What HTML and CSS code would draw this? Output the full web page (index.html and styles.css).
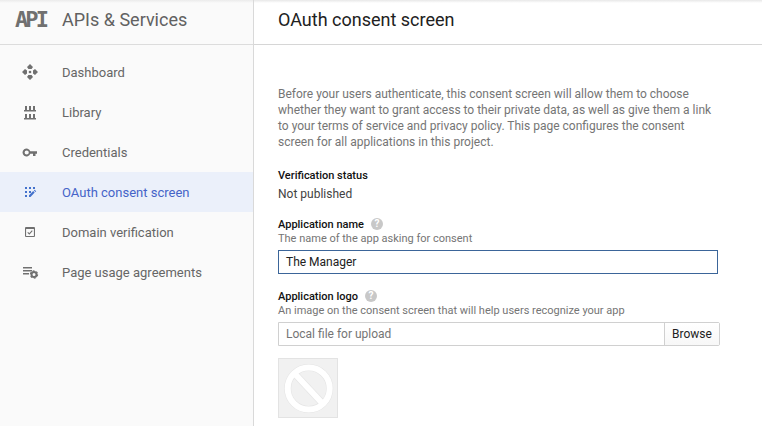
FILE: index.html
```html
<!DOCTYPE html>
<html lang="en">
<head>
<meta charset="utf-8">
<title>OAuth consent screen</title>
<link rel="stylesheet" href="styles.css">
</head>
<body>
<div class="app">
  <aside class="sidebar">
    <header class="brand"><span class="brand-mark">API</span><span class="brand-name">APIs &amp; Services</span></header>
    <nav class="nav">
      <a class="nav-item"><svg class="icon" viewBox="0 0 16 16"><path d="M8 0l3 3-1.400 2H6.400L5 3zM16 8l-3 3-2-1.400V6.400L13 5zM8 16l-3-3 1.400-2h3.200L11 13zM0 8l3-3 2 1.400v3.200L3 11z"/><circle cx="8" cy="8" r="1.300"/></svg><span>Dashboard</span></a>
      <a class="nav-item"><svg class="icon" viewBox="0 0 16 16"><path d="M3 2h2v4.500H3zM7 2h2v4.500H7zM11 2h2v4.500h-2zM2 6h12v1.500H2zM3 10h2v4.500H3zM7 10h2v4.500H7zM11 10h2v4.500h-2zM2 14h12v1.500H2z"/></svg><span>Library</span></a>
      <a class="nav-item"><svg class="icon" viewBox="0 0 16 16"><path fill-rule="evenodd" d="M8.300 7.200a4 4 0 1 0 0 2.600H11v2.200h2.500V9.800H15V7.200zM4.700 10.600a2.100 2.100 0 1 1 0-4.200 2.100 2.100 0 0 1 0 4.200z"/></svg><span>Credentials</span></a>
      <a class="nav-item active"><svg class="icon" viewBox="0 0 16 16"><path d="M3 3h2v2H3zM7 3h2v2H7zM11 3h2v2h-2zM3 7h2v2H3zM7 7h2v2H7zM3 11h2v2H3zM7 13v-1.700l4.200-4.200 1.500 1.500L8.500 13zM11.900 6.500l.8-.8 1.500 1.500-.8.8z"/></svg><span>OAuth consent screen</span></a>
      <a class="nav-item"><svg class="icon" viewBox="0 0 16 16"><path fill-rule="evenodd" d="M4 3h8q1 0 1 1v8q0 1-1 1H4q-1 0-1-1V4q0-1 1-1zM4.100 5v6.900h7.800V5z"/><path class="check" d="M5.700 8.400l1.600 1.500 3-3.200"/></svg><span>Domain verification</span></a>
      <a class="nav-item"><svg class="icon" viewBox="0 0 16 16"><path d="M1 3h9v1.500H1zM1 6h9v1.500H1zM1 9h6v1.500H1z"/><circle class="gear" cx="12" cy="10.500" r="2.500"/><circle class="teeth" cx="12" cy="10.500" r="3.600"/></svg><span>Page usage agreements</span></a>
    </nav>
  </aside>
  <main class="main">
    <header class="page-head"><h1>OAuth consent screen</h1></header>
    <div class="content">
      <p class="intro">Before your users authenticate, this consent screen will allow them to choose<br>whether they want to grant access to their private data, as well as give them a link<br>to your terms of service and privacy policy. This page configures the consent<br>screen for all applications in this project.</p>
      <section class="status"><h2>Verification status</h2><p>Not published</p></section>
      <section class="field">
        <div class="label"><h2>Application name</h2><span class="help">?</span></div>
        <p class="hint">The name of the app asking for consent</p>
        <div class="input">The Manager</div>
      </section>
      <section class="field">
        <div class="label"><h2>Application logo</h2><span class="help">?</span></div>
        <p class="hint">An image on the consent screen that will help users recognize your app</p>
        <div class="file"><div class="file-name">Local file for upload</div><div class="browse">Browse</div></div>
      </section>
      <div class="preview"><svg viewBox="0 0 58 58"><g class="ban-edge"><circle cx="29.700" cy="29.500" r="21"/><path d="M16 15l28 30"/></g><g class="ban"><circle cx="29.700" cy="29.500" r="21"/><path d="M16 15l28 30"/></g></svg></div>
    </div>
  </main>
</div>
</body>
</html>
```
FILE: styles.css
```css
* { box-sizing: border-box; }
body, h1, h2, p { margin: 0; }
body { font-family: Roboto, "Liberation Sans", sans-serif; font-size: 12px; color: #212121; background: #fff; overflow: hidden; }
.app { display: flex; width: 762px; height: 426px; background: linear-gradient(#e8e8e8, rgba(250,250,250,0)) top / 100% 3px no-repeat; }
.sidebar { width: 254px; border-right: 1px solid #d9d9d9; background: linear-gradient(#ebebeb, #fafafa) top / 100% 3px no-repeat #fafafa; }
.brand { display: flex; align-items: center; height: 45px; padding: 0 0 5px 15px; border-bottom: 1px solid #dcdcdc; }
.brand-mark { width: 47px; font: bold 22px/22px "DejaVu Sans Mono", monospace; letter-spacing: -2.900px; color: #707070; }
.brand-name { font-size: 18px; color: #616161; }
.nav { padding-top: 7px; }
.nav-item { display: flex; align-items: center; height: 40px; padding-left: 22px; gap: 24px; font-size: 13px; color: #666; }
.nav-item.active { background: #ebf0fa; color: #4564c8; }
.icon { width: 16px; height: 16px; fill: #707070; overflow: visible; }
.active .icon { fill: #4472cc; }
.check { fill: none; stroke: #707070; stroke-width: 1.100; }
.gear { fill: none; stroke: #707070; stroke-width: 2; }
.teeth { fill: none; stroke: #707070; stroke-width: 1.200; stroke-dasharray: 1.900 1.870; }
.main { flex: 1; }
.page-head { display: flex; align-items: center; height: 45px; padding: 0 0 5px 24px; border-bottom: 1px solid #d6d6d6; }
h1 { font-size: 18px; font-weight: 400; }
.content { padding: 41px 0 0 24px; }
.intro { line-height: 16px; color: #757575; white-space: nowrap; }
h2 { font-size: 11px; line-height: 16px; font-weight: 500; color: #111; }
.status { margin-top: 18px; height: 49px; }
.status p { line-height: 16px; margin-top: 2px; color: #424242; }
.field { height: 72px; }
.label { display: flex; align-items: center; height: 16px; gap: 7px; }
.help { width: 12px; height: 12px; margin-bottom: 2px; border-radius: 50%; background: #c8c8c8; color: #fff; font-weight: 700; font-size: 10px; line-height: 12px; text-align: center; }
.hint { font-size: 11px; line-height: 13px; margin-top: -1px; color: #757575; }
.input { width: 440px; height: 24px; margin-top: 5px; padding-left: 7px; border: 1px solid #3b6599; line-height: 22px; }
.file { display: flex; width: 442px; height: 24px; margin-top: 5px; border: 1px solid #d0d0d0; border-radius: 0 2px 2px 0; line-height: 22px; }
.file-name { width: 385px; padding-left: 7px; color: #757575; }
.browse { flex: 1; border-left: 1px solid #d0d0d0; background: linear-gradient(#fff, #f7f7f7); text-align: center; }
.preview { width: 60px; height: 60px; margin-top: -3px; border: 1px solid #e3e3e3; background: #f1f1f1; }
.preview svg { display: block; width: 58px; height: 58px; }
.ban-edge, .ban { fill: none; stroke: #e4e4e4; stroke-width: 7; }
.ban { stroke: #fff; stroke-width: 6; }
```
